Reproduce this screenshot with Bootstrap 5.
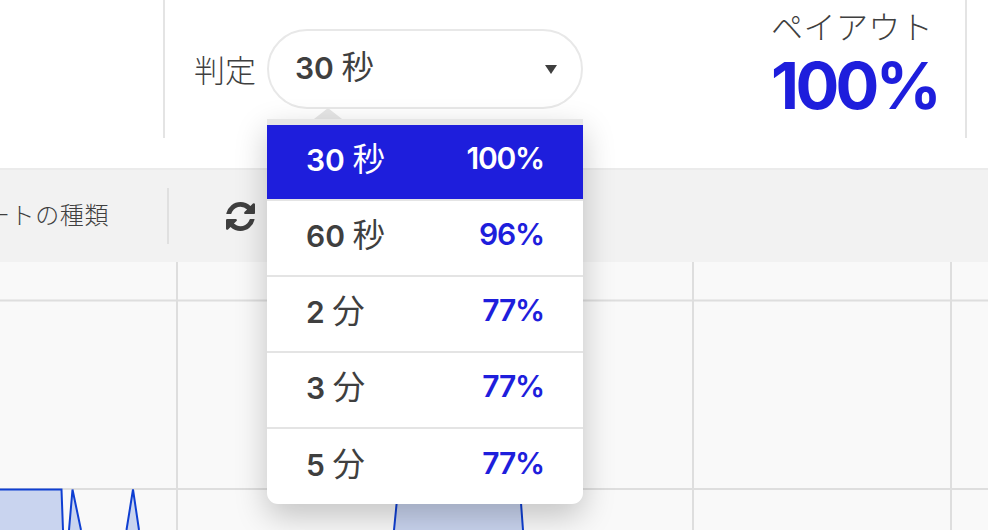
<!DOCTYPE html>
<html lang="ja">
<head>
<meta charset="utf-8">
<title>判定</title>
<link href="https://cdn.jsdelivr.net/npm/bootstrap@5.3.0/dist/css/bootstrap.min.css" rel="stylesheet">
<style>
html,body{height:100%;overflow:hidden}
body{font-family:"Inter","Noto Sans CJK JP",sans-serif;color:#3f3f3f;background:#fff}
.screen{height:530px}
.top-bar{height:170px;border-bottom:2px solid #ebebeb;padding-right:21px}
.top-cell{height:138px}
.cell-first{width:165px;border-right:2px solid #e4e4e4}
.cell-expiry{padding-left:29px;min-width:0}
.cell-pay{border-right:2px solid #e4e4e4;padding-right:27px;padding-top:9px;line-height:1}
.expiry-label{font-family:"Noto Sans CJK JP",sans-serif;font-size:31px;margin-right:11px;font-weight:300}
.picker{width:316px;height:80px}
.picker-btn{width:100%;height:100%;border:2px solid #e8e8e8;border-radius:40px;background:#fff;padding:0 24px 6px 26px;font-size:30px;font-weight:600;color:#3f3f3f;line-height:1}
.unit{font-family:"Noto Sans CJK JP",sans-serif;font-weight:400;font-size:1.08em}
.caret-mark{width:0;height:0;border-left:6px solid transparent;border-right:6px solid transparent;border-top:9px solid #3f3f3f;margin-top:6px}
.picker-tip{left:47px;top:79px;width:0;height:0;border-left:14px solid transparent;border-right:14px solid transparent;border-bottom:11px solid #e6e6e6}
.picker-menu{left:0;top:90px;width:316px;border:0;border-top:6px solid #e6e6e6;border-radius:0 0 11px 11px;padding:0;margin:0;box-shadow:0 12px 32px rgba(0,0,0,.22);overflow:hidden;z-index:5}
.picker-row{height:76px;padding:0 39px 8px 39px;border-bottom:2px solid #e4e4e4;font-size:30px;font-weight:600;color:#3f3f3f;line-height:1}
.picker-row:last-child{border-bottom:0;height:75px}
.picker-row .pct{color:#1e1edc;letter-spacing:-1.2px;font-size:30px}
.picker-row.on,.picker-row.on:hover{background:#1e1edc;color:#fff;height:74px;border-bottom:0;margin-bottom:2px;box-shadow:0 2px 0 #e4e4e4}
.picker-row.on .pct{color:#fff}
.pay-label{font-family:"Noto Sans CJK JP",sans-serif;font-size:32px;font-weight:300;letter-spacing:.4px;margin-bottom:12px}
.pay-value{font-size:65px;font-weight:700;color:#1e1edc;letter-spacing:-3.7px}
.tool-bar{height:92px;background:#f2f2f2}
.tool-type{width:169px;height:56px;border-right:2px solid #e0e0e0;padding-right:58px;padding-bottom:4px;font-family:"Noto Sans CJK JP",sans-serif;font-size:24px;font-weight:300;letter-spacing:.6px;white-space:nowrap}
.tool-refresh{margin-left:57px;width:29px;height:29px;fill:#3f3f3f}
.plot{height:268px;background:#f9f9f9}
.plot svg{display:block}
</style>
</head>
<body>
<div class="screen d-flex flex-column">
  <div class="top-bar d-flex align-items-start">
    <div class="top-cell cell-first"></div>
    <div class="top-cell cell-expiry flex-grow-1 d-flex align-items-center">
      <span class="expiry-label">判定</span>
      <div class="picker position-relative flex-shrink-0">
        <button class="picker-btn d-flex align-items-center justify-content-between" type="button">
          <span>30 <span class="unit">秒</span></span><span class="caret-mark"></span>
        </button>
        <div class="picker-tip position-absolute"></div>
        <div class="picker-menu dropdown-menu show position-absolute">
          <a class="dropdown-item picker-row on d-flex align-items-center justify-content-between" href="#"><span>30 <span class="unit">秒</span></span><span class="pct">100%</span></a>
          <a class="dropdown-item picker-row d-flex align-items-center justify-content-between" href="#"><span>60 <span class="unit">秒</span></span><span class="pct">96%</span></a>
          <a class="dropdown-item picker-row d-flex align-items-center justify-content-between" href="#"><span>2 <span class="unit">分</span></span><span class="pct">77%</span></a>
          <a class="dropdown-item picker-row d-flex align-items-center justify-content-between" href="#"><span>3 <span class="unit">分</span></span><span class="pct">77%</span></a>
          <a class="dropdown-item picker-row d-flex align-items-center justify-content-between" href="#"><span>5 <span class="unit">分</span></span><span class="pct">77%</span></a>
        </div>
      </div>
    </div>
    <div class="top-cell cell-pay">
      <div class="pay-label">ペイアウト</div>
      <div class="pay-value">100%</div>
    </div>
  </div>
  <div class="tool-bar d-flex align-items-center">
    <div class="tool-type d-flex align-items-center justify-content-end">ートの種類</div>
    <svg class="tool-refresh" viewBox="0 0 1536 1536" aria-hidden="true"><path d="M1511 928q0 5-1 7-64 268-268 434.5t-478 166.5q-146 0-282.5-55t-243.5-157l-129 129q-19 19-45 19t-45-19-19-45v-448q0-26 19-45t45-19h448q26 0 45 19t19 45-19 45l-137 137q71 66 161 102t187 36q134 0 250-65t186-179q11-17 53-117 8-23 30-23h192q13 0 22.5 9.5t9.5 22.5zm25-800v448q0 26-19 45t-45 19h-448q-26 0-45-19t-19-45 19-45l138-138q-148-137-349-137-134 0-250 65t-186 179q-11 17-53 117-8 23-30 23h-199q-13 0-22.5-9.5t-9.5-22.5v-7q65-268 270-434.5t480-166.5q146 0 284 55.5t245 156.5l130-129q19-19 45-19t45 19 19 45z"/></svg>
  </div>
  <div class="plot">
    <svg width="988" height="268" viewBox="0 0 988 268" aria-hidden="true">
      <g stroke="#dedede" stroke-width="2" fill="none">
        <path d="M0 38.500H988M0 227H988"/>
        <path d="M177 0V268M435 0V268M693 0V268M951 0V268"/>
      </g>
      <path d="M-2 227.500H61.500L63 268H-2ZM72.500 227.500L81 268H69ZM133 227.500L126.500 268H139ZM396 242L394 268H523L520 227.500H398Z" fill="#c9d4ef"/>
      <path d="M-2 227.500H61.500L63 268M69 268L72.500 227.500L81 268M126.500 268L133 227.500L139 268M394 268L398 227.500H520L523 268" fill="none" stroke="#0f3fd2" stroke-width="2"/>
    </svg>
  </div>
</div>
<script src="https://cdn.jsdelivr.net/npm/bootstrap@5.3.0/dist/js/bootstrap.bundle.min.js"></script>
</body>
</html>
